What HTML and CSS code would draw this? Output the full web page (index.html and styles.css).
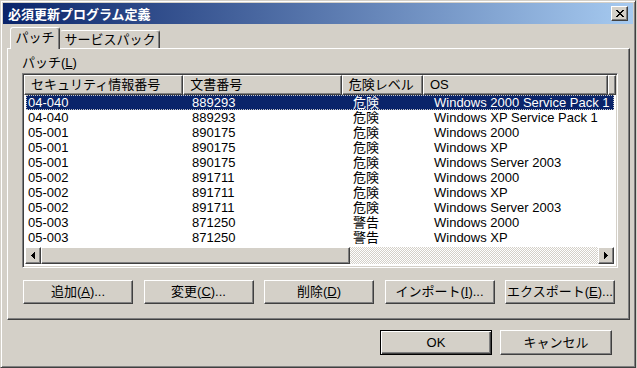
FILE: index.html
```html
<!DOCTYPE html>
<html lang="ja">
<head>
<meta charset="utf-8">
<title>必須更新プログラム定義</title>
<link rel="stylesheet" href="styles.css">
</head>
<body>
<div class="dialog">
  <div class="titlebar">
    <span class="title">必須更新プログラム定義</span>
    <div class="close btn3d">
      <svg width="8" height="7" viewBox="0 0 8 7" shape-rendering="crispEdges"><path d="M0 0h2v1h-2zM6 0h2v1h-2zM1 1h2v1h-2zM5 1h2v1h-2zM2 2h4v1h-4zM3 3h2v1h-2zM2 4h4v1h-4zM1 5h2v1h-2zM5 5h2v1h-2zM0 6h2v1h-2zM6 6h2v1h-2z" fill="#000"/></svg>
    </div>
  </div>
  <div class="main">
    <div class="tabs">
      <div class="tab active">パッチ</div>
      <div class="tab">サービスパック</div>
    </div>
    <div class="panel">
      <div class="label">パッチ(<u>L</u>)</div>
      <div class="listbox">
        <div class="listinner">
          <div class="header">
            <div class="hcell c1">セキュリティ情報番号</div>
            <div class="hcell c2">文書番号</div>
            <div class="hcell c3">危険レベル</div>
            <div class="hcell c4">OS</div>
            <div class="hcell filler"></div>
          </div>
          <div class="rows">
            <div class="row selected"><span class="cell c1">04-040</span><span class="cell c2">889293</span><span class="cell c3">危険</span><span class="cell c4">Windows 2000 Service Pack 1</span></div>
            <div class="row"><span class="cell c1">04-040</span><span class="cell c2">889293</span><span class="cell c3">危険</span><span class="cell c4">Windows XP Service Pack 1</span></div>
            <div class="row"><span class="cell c1">05-001</span><span class="cell c2">890175</span><span class="cell c3">危険</span><span class="cell c4">Windows 2000</span></div>
            <div class="row"><span class="cell c1">05-001</span><span class="cell c2">890175</span><span class="cell c3">危険</span><span class="cell c4">Windows XP</span></div>
            <div class="row"><span class="cell c1">05-001</span><span class="cell c2">890175</span><span class="cell c3">危険</span><span class="cell c4">Windows Server 2003</span></div>
            <div class="row"><span class="cell c1">05-002</span><span class="cell c2">891711</span><span class="cell c3">危険</span><span class="cell c4">Windows 2000</span></div>
            <div class="row"><span class="cell c1">05-002</span><span class="cell c2">891711</span><span class="cell c3">危険</span><span class="cell c4">Windows XP</span></div>
            <div class="row"><span class="cell c1">05-002</span><span class="cell c2">891711</span><span class="cell c3">危険</span><span class="cell c4">Windows Server 2003</span></div>
            <div class="row"><span class="cell c1">05-003</span><span class="cell c2">871250</span><span class="cell c3">警告</span><span class="cell c4">Windows 2000</span></div>
            <div class="row"><span class="cell c1">05-003</span><span class="cell c2">871250</span><span class="cell c3">警告</span><span class="cell c4">Windows XP</span></div>
          </div>
          <div class="hscroll">
            <div class="sbtn btn3d"><svg width="4" height="7" viewBox="0 0 4 7" shape-rendering="crispEdges"><path d="M3 0h1v7h-1zM2 1h1v5h-1zM1 2h1v3h-1zM0 3h1v1h-1z" fill="#000"/></svg></div>
            <div class="thumb btn3d"></div>
            <div class="track"></div>
            <div class="sbtn btn3d"><svg width="4" height="7" viewBox="0 0 4 7" shape-rendering="crispEdges"><path d="M0 0h1v7h-1zM1 1h1v5h-1zM2 2h1v3h-1zM3 3h1v1h-1z" fill="#000"/></svg></div>
          </div>
        </div>
      </div>
      <div class="actions">
        <div class="btn btn3d">追加(<u>A</u>)...</div>
        <div class="btn btn3d">変更(<u>C</u>)...</div>
        <div class="btn btn3d">削除(<u>D</u>)</div>
        <div class="btn btn3d">インポート(<u>I</u>)...</div>
        <div class="btn btn3d">エクスポート(<u>E</u>)...</div>
      </div>
    </div>
    <div class="footer">
      <div class="btn btn3d wide default">OK</div>
      <div class="btn btn3d wide">キャンセル</div>
    </div>
  </div>
</div>
</body>
</html>
```
FILE: styles.css
```css
* { box-sizing: border-box; }
html, body { margin: 0; padding: 0; }
body {
  width: 637px;
  height: 368px;
  overflow: hidden;
  background: #d4d0c8;
  font-family: "Liberation Sans", "Noto Sans CJK JP", sans-serif;
  font-size: 13px;
  color: #000;
}
u { text-decoration: underline; text-underline-offset: 1px; }

.dialog {
  width: 636px;
  height: 368px;
  border: 1px solid;
  border-color: #d4d0c8 #404040 #404040 #d4d0c8;
  box-shadow: inset 1px 1px #fff, inset -1px -1px #808080;
  padding: 2px;
  display: flex;
  flex-direction: column;
  background: #d4d0c8;
}

.btn3d {
  background: #d4d0c8;
  border: 1px solid;
  border-color: #fff #404040 #404040 #fff;
  box-shadow: inset -1px -1px #808080;
}

.titlebar {
  height: 21px;
  display: flex;
  align-items: center;
  padding: 0 5px 0 5px;
  background: linear-gradient(to right, #0a246a, #a6caf0);
  color: #fff;
  font-family: "Noto Sans CJK JP", sans-serif;
  font-weight: bold;
  font-size: 13px;
  line-height: 21px;
}
.close {
  margin-left: auto;
  width: 17px;
  height: 15px;
  display: flex;
  align-items: center;
  justify-content: center;
  padding-bottom: 1px;
}
.close svg { display: block; }

.main {
  flex: 1;
  display: flex;
  flex-direction: column;
  padding: 3px 3px 0 4px;
}

.tabs {
  height: 21px;
  display: flex;
  align-items: flex-end;
  padding-left: 3px;
}
.tab {
  background: #d4d0c8;
  border: 1px solid;
  border-bottom: none;
  border-color: #fff #404040 transparent #fff;
  border-radius: 3px 3px 0 0;
  box-shadow: inset -1px 0 #808080;
  text-align: center;
  font-family: "Noto Sans CJK JP", sans-serif;
  font-size: 13px;
  white-space: nowrap;
}
.tab.active {
  width: 50px;
  height: 22px;
  line-height: 18px;
  margin-bottom: -1px;
  position: relative;
  z-index: 1;
}
.tab:not(.active) {
  width: 100px;
  height: 18px;
  line-height: 16px;
  border-left-color: transparent;
}

.panel {
  height: 272px;
  border: 1px solid;
  border-color: #fff #404040 #404040 #fff;
  box-shadow: inset -1px -1px #808080;
  padding: 6px 11px 0 14px;
  display: flex;
  flex-direction: column;
}
.label {
  line-height: 16px;
  height: 16px;
  margin-bottom: 2px;
}

.listbox {
  height: 195px;
  border: 1px solid;
  border-color: #808080 #fff #fff #808080;
  box-shadow: inset 1px 1px #404040, inset -1px -1px #d4d0c8;
  padding: 1px;
}
.listinner {
  background: #fff;
  height: 100%;
  display: flex;
  flex-direction: column;
}
.header {
  display: flex;
  height: 20px;
}
.hcell {
  height: 20px;
  background: #d4d0c8;
  border: 1px solid;
  border-color: #fff #404040 #404040 #fff;
  box-shadow: inset -1px -1px #808080;
  padding-left: 6px;
  line-height: 17px;
  white-space: nowrap;
  overflow: hidden;
}
.hcell.c1 { width: 161px; }
.hcell.c2 { width: 160px; }
.hcell.c3 { width: 82px; }
.hcell.c4 { width: 187px; }
.hcell.filler { flex: 1; }

.rows {
  height: 152px;
}
.row {
  display: flex;
  height: 15px;
  line-height: 15px;
  margin-left: 2px;
  width: 588px;
  white-space: nowrap;
}
.row.selected {
  background: #0a246a;
  color: #fff;
  outline: 1px dotted #c8c8c8;
  outline-offset: -1px;
}
.cell { display: block; overflow: hidden; }
.cell.c1 { width: 159px; padding-left: 2px; }
.cell.c2 { width: 160px; padding-left: 7px; }
.cell.c3 { width: 82px; padding-left: 8px; }
.cell.c4 { width: 187px; padding-left: 7px; }

.hscroll {
  display: flex;
  height: 17px;
  margin: 0 2px 0 1px;
}
.sbtn {
  width: 16px;
  height: 17px;
  display: flex;
  align-items: center;
  justify-content: center;
}
.sbtn svg { display: block; }
.thumb {
  width: 309px;
  height: 17px;
}
.track {
  flex: 1;
  background: repeating-conic-gradient(#fff 0 25%, #d4d0c8 0 50%) 0 0 / 2px 2px;
}

.actions {
  display: flex;
  justify-content: space-between;
  margin: 12px 3px 0 1px;
}
.btn {
  width: 110px;
  height: 24px;
  line-height: 22px;
  text-align: center;
  white-space: nowrap;
}

.footer {
  display: flex;
  justify-content: flex-end;
  gap: 8px;
  margin-top: 10px;
  padding-right: 18px;
}
.btn.wide {
  width: 112px;
  height: 25px;
  line-height: 23px;
}
.btn.default {
  border-color: #000;
  box-shadow: inset 1px 1px #fff, inset -1px -1px #404040, inset -2px -2px #808080;
}
```
